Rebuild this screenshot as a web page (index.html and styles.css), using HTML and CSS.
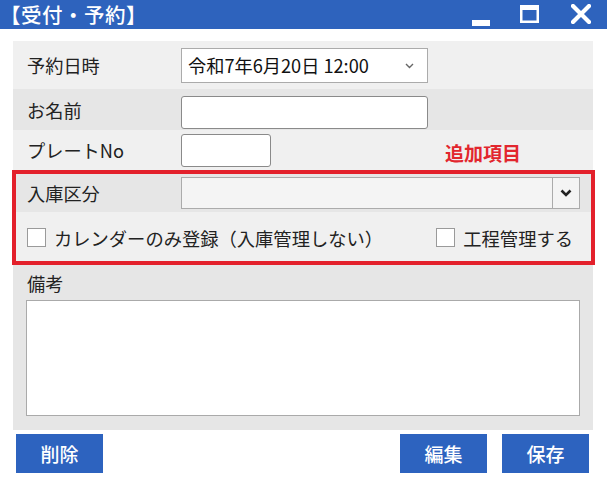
FILE: index.html
```html
<!DOCTYPE html>
<html lang="ja">
<head>
<meta charset="utf-8">
<title>受付・予約</title>
<link rel="stylesheet" href="styles.css">
</head>
<body>
<div class="window">
  <header class="titlebar">
    <div class="title">【受付・予約】</div>
    <div class="controls">
      <svg class="ctl ctl-min" width="18" height="18" viewBox="0 0 18 18"><rect x="0" y="11" width="18" height="6" fill="#fff"/></svg>
      <svg class="ctl ctl-max" width="19" height="18" viewBox="0 0 19 18"><rect x="1.25" y="2" width="16.5" height="14.75" fill="none" stroke="#fff" stroke-width="2.5"/><rect x="0" y="0" width="19" height="5" fill="#fff"/></svg>
      <svg class="ctl ctl-close" width="20" height="20" viewBox="0 0 20 20"><path d="M2 2 L18 18 M18 2 L2 18" stroke="#fff" stroke-width="4.2" stroke-linecap="square"/></svg>
    </div>
  </header>

  <main class="panel">
    <div class="row row-light row-date">
      <div class="label">予約日時</div>
      <div class="select-date">
        <span class="date-text">令和7年6月20日 12:00</span>
        <svg class="caret" width="9" height="6" viewBox="0 0 9 6"><path d="M1 1 L4.5 4.5 L8 1" fill="none" stroke="#666" stroke-width="1.4"/></svg>
      </div>
    </div>
    <div class="row row-dark row-name">
      <div class="label">お名前</div>
      <div class="input input-name"></div>
    </div>
    <div class="row row-light row-plate">
      <div class="label">プレートNo</div>
      <div class="input input-plate"></div>
      <div class="added">追加項目</div>
    </div>

    <section class="redbox">
      <div class="row row-dark row-kubun">
        <div class="label label-kubun">入庫区分</div>
        <div class="combo">
          <div class="combo-field"></div>
          <div class="combo-btn">
            <svg width="12" height="8" viewBox="0 0 12 8"><path d="M1.5 1.5 L6 6 L10.5 1.5" fill="none" stroke="#222" stroke-width="2.6"/></svg>
          </div>
        </div>
      </div>
      <div class="row row-light row-checks">
        <label class="check"><span class="box"></span><span class="check-text">カレンダーのみ登録（入庫管理しない）</span></label>
        <label class="check"><span class="box"></span><span class="check-text">工程管理する</span></label>
      </div>
    </section>

    <section class="memo">
      <div class="memo-label">備考</div>
      <div class="memo-area"></div>
    </section>
  </main>

  <footer class="actions">
    <button class="btn">削除</button>
    <div class="spacer"></div>
    <button class="btn">編集</button>
    <button class="btn">保存</button>
  </footer>
</div>
</body>
</html>
```

FILE: styles.css
```css
* { box-sizing: border-box; }

html, body {
  margin: 0;
  padding: 0;
  background: #ffffff;
}

body {
  font-family: "Noto Sans CJK JP", "Noto Sans", sans-serif;
  color: #222222;
  width: 607px;
  height: 491px;
  overflow: hidden;
}

.titlebar {
  height: 29px;
  background: #2e63bd;
  color: #ffffff;
  display: flex;
  align-items: center;
  justify-content: space-between;
}

.title {
  font-size: 20.5px;
  line-height: 29px;
  font-weight: 500;
  padding-left: 0;
  letter-spacing: 0.5px;
}

.controls {
  display: flex;
  align-items: center;
  padding-right: 16px;
  height: 29px;
}

.ctl { display: block; }
.ctl-min { margin-right: 30px; margin-top: 6px; }
.ctl-max { margin-right: 32px; margin-top: -1px; }
.ctl-close { margin-top: -1px; }

.panel {
  margin: 12px 14px 0 13px;
  width: 580px;
}

.row {
  display: flex;
  align-items: center;
}

.row-light { background: #f0f0f0; }
.row-dark { background: #e6e6e6; }

.label {
  width: 168px;
  padding-left: 14px;
  font-size: 18.2px;
  line-height: 24px;
  flex: none;
}

.row-date { height: 48px; }
.row-name { height: 41px; }
.row-plate { height: 40px; }

.select-date {
  width: 247px;
  height: 35px;
  background: #ffffff;
  border: 1px solid #ababab;
  display: flex;
  align-items: center;
  justify-content: space-between;
  padding: 0 13px 0 6px;
}

.date-text {
  font-size: 18.2px;
  line-height: 22px;
  color: #111;
}

.caret { display: block; margin-top: 1px; }

.input {
  height: 33px;
  background: #ffffff;
  border: 1px solid #8a8a8a;
  border-radius: 3px;
}

.input-name { width: 247px; margin-top: 6px; }
.input-plate { width: 90px; }

.added {
  margin-left: auto;
  margin-right: 72px;
  margin-top: 6px;
  color: #e2262e;
  font-weight: 700;
  font-size: 19px;
  line-height: 22px;
}

.redbox {
  border: 4px solid #e3202b;
  margin: 0 -2px 0 -1px;
}

.row-kubun { height: 38px; }
.label-kubun { width: 165px; padding-left: 11px; }

.combo {
  display: flex;
  width: 399px;
  height: 32px;
  border: 1px solid #ababab;
  background: #f4f4f4;
}

.combo-field { flex: 1; }

.combo-btn {
  width: 27px;
  border-left: 1px solid #ababab;
  display: flex;
  align-items: center;
  justify-content: center;
}

.combo-btn svg { display: block; }

.row-checks {
  height: 49px;
  justify-content: space-between;
  padding: 2px 18px 0 11px;
}

.check {
  display: flex;
  align-items: center;
  gap: 8px;
}

.box {
  width: 19px;
  height: 19px;
  background: #ffffff;
  border: 1px solid #9a9a9a;
  flex: none;
}

.check-text {
  font-size: 18.3px;
  line-height: 24px;
  color: #222;
}

.memo {
  height: 165px;
  background: #e6e6e6;
  padding: 5px 13px 0 13px;
}

.memo-label {
  font-size: 18.2px;
  line-height: 26px;
  padding-left: 1px;
}

.memo-area {
  margin-top: 4px;
  height: 116px;
  background: #ffffff;
  border: 1px solid #aaaaaa;
}

.actions {
  display: flex;
  margin-top: 4px;
  padding: 0 18px 0 16px;
  gap: 15px;
}

.spacer { flex: 1; }

.btn {
  width: 87px;
  height: 39px;
  border: none;
  background: #2d63bf;
  color: #ffffff;
  font-family: "Noto Sans CJK JP", "Noto Sans", sans-serif;
  font-size: 19px;
  font-weight: 500;
  padding: 0;
  line-height: 39px;
}
```
